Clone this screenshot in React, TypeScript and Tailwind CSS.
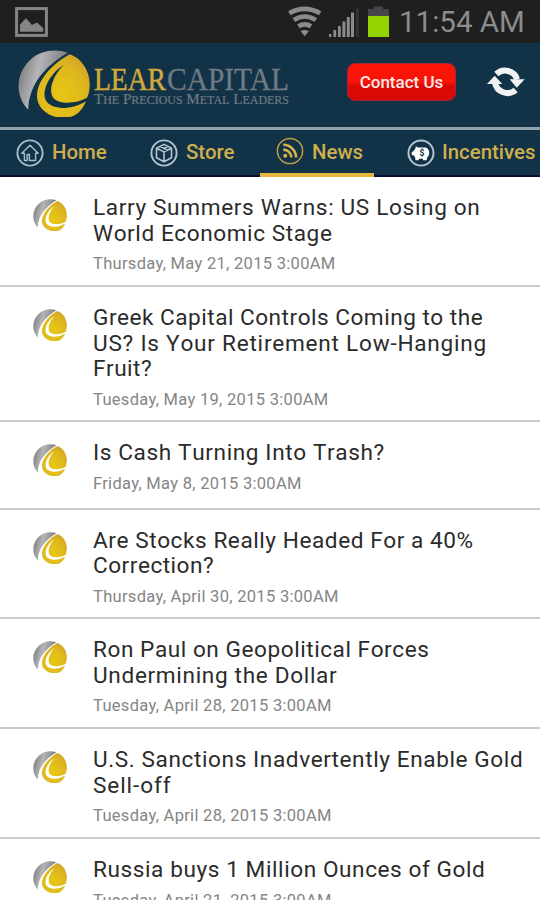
import React from "react";

type Line = [text: string, tracking: string];
type Item = { lines: Line[]; date: string; height: string };

const items: Item[] = [
  {
    lines: [["Larry Summers Warns: US Losing on", "tracking-[0.66px]"], ["World Economic Stage", "tracking-[0.58px]"]],
    date: "Thursday, May 21, 2015 3:00AM",
    height: "h-[110px]",
  },
  {
    lines: [
      ["Greek Capital Controls Coming to the", "tracking-[0.5px]"],
      ["US? Is Your Retirement Low-Hanging", "tracking-[0.76px]"],
      ["Fruit?", "tracking-[0.5px]"],
    ],
    date: "Tuesday, May 19, 2015 3:00AM",
    height: "h-[135px]",
  },
  { lines: [["Is Cash Turning Into Trash?", "tracking-[0.62px]"]], date: "Friday, May 8, 2015 3:00AM", height: "h-[87.5px]" },
  {
    lines: [["Are Stocks Really Headed For a 40%", "tracking-[0.56px]"], ["Correction?", "tracking-[0.5px]"]],
    date: "Thursday, April 30, 2015 3:00AM",
    height: "h-[109.5px]",
  },
  {
    lines: [["Ron Paul on Geopolitical Forces", "tracking-[0.55px]"], ["Undermining the Dollar", "tracking-[0.67px]"]],
    date: "Tuesday, April 28, 2015 3:00AM",
    height: "h-[110px]",
  },
  {
    lines: [["U.S. Sanctions Inadvertently Enable Gold", "tracking-[0.6px]"], ["Sell-off", "tracking-[0.9px]"]],
    date: "Tuesday, April 28, 2015 3:00AM",
    height: "h-[110px]",
  },
  { lines: [["Russia buys 1 Million Ounces of Gold", "tracking-[0.58px]"]], date: "Tuesday, April 21, 2015 3:00AM", height: "h-[88px]" },
];

function Emblem({ className, id }: { className: string; id: string }) {
  return (
    <svg className={className} viewBox="23 22 218 203" preserveAspectRatio="none">
      <defs>
        <linearGradient id={id + "s"} x1="0" y1="0.2" x2="1" y2="0.5">
          <stop offset="0" stopColor="#777779" />
          <stop offset="0.4" stopColor="#b5b5b7" />
          <stop offset="1" stopColor="#6d6d70" />
        </linearGradient>
        <radialGradient id={id + "g"} cx="0.45" cy="0.65" r="0.75">
          <stop offset="0" stopColor="#e8c713" />
          <stop offset="0.6" stopColor="#dfb81e" />
          <stop offset="1" stopColor="#cc9e2c" />
        </radialGradient>
      </defs>
      <path d="M173 30C138 18 92 22 60 52C12 96 16 166 54 203C56 130 98 76 173 30Z" fill={`url(#${id}s)`} />
      <path
        d="M180 35C218 48 242 90 240 130Q239 153 232 167C200 186 145 188 129 166C112 138 136 92 162 67C124 90 93 140 106 173C124 207 188 203 229 177C218 204 198 224 176 225H138C104 217 76 190 81 152C88 104 135 58 180 35Z"
        fill={`url(#${id}g)`}
      />
    </svg>
  );
}

function HomeIcon() {
  return (
    <svg className="size-7 shrink-0" viewBox="0 0 28 28" fill="none" stroke="#a9bccb">
      <circle cx="14" cy="14" r="12.6" strokeWidth="1.9" />
      <path d="M5.8 14.3L14 6.2l8.2 8.1h-2.6v7.2h-6.2v-6h-2.2v6H8.4v-7.2z" strokeWidth="1.4" strokeLinejoin="round" />
    </svg>
  );
}

function StoreIcon() {
  return (
    <svg className="size-7 shrink-0" viewBox="0 0 28 28" fill="none" stroke="#b4c3cf">
      <circle cx="14" cy="14" r="12.6" strokeWidth="1.9" />
      <path d="M14 5.4l7.5 3.8v9.5L14 22.8l-7.5-4.1V9.2zM6.5 9.2l7.5 3.7 7.5-3.7M14 12.9v9.9M10 7.4l7.7 3.8M17.7 7.4l-4 1.8" strokeWidth="1.6" strokeLinejoin="round" />
    </svg>
  );
}

function NewsIcon() {
  return (
    <svg className="size-7 shrink-0" viewBox="0 0 28 28" fill="none" stroke="#d9b248">
      <circle cx="14" cy="14" r="12.6" strokeWidth="1.5" stroke="#bd9d48" />
      <circle cx="9.3" cy="18.7" r="2" fill="#d9b248" stroke="none" />
      <path d="M7.3 12.6a8 8 0 0 1 8 8M7.3 7.8a12.8 12.8 0 0 1 12.8 12.8" strokeWidth="2.6" />
    </svg>
  );
}

function IncentivesIcon() {
  return (
    <svg className="size-7 shrink-0" viewBox="0 0 28 28">
      <circle cx="14" cy="14" r="12.5" strokeWidth="2" fill="none" stroke="#b4c3cf" />
      <path d="M4.8 13l2.1-1.2 1.6-2.6.2-2 2.3 1.2h7.6c2.2.7 3.6 2.5 3.7 5.4-.1 2.4-1 3.8-2.2 4.9l-.4 2.5h-3.5l-.5-1.5h-3.5l-.5 1.5H8.5L8 17.9l-1.4-1.6H4.8z" fill="#fff" />
      <text x="15" y="17" textAnchor="middle" fontSize="8.5" fontWeight="700" fill="#123347" className="font-[Roboto,sans-serif]">$</text>
    </svg>
  );
}

function NavLabel({ children }: { children: string }) {
  return <span className="text-[20.4px] leading-7 font-medium text-[#cfae4e]">{children}</span>;
}

export default function App() {
  return (
    <div className="flex h-[900px] w-[540px] flex-col overflow-hidden bg-white font-[Roboto,sans-serif]">
      {/* Status bar */}
      <div className="flex h-[43px] shrink-0 items-start bg-[#1f1f1f]">
        <svg className="mt-[7px] ml-[15px] h-[30px] w-[33px]" viewBox="0 0 33 30">
          <rect x="1.6" y="1.6" width="29.8" height="26.8" fill="none" stroke="#858585" strokeWidth="3" />
          <path d="M5 24.8v-7.3l6-6.3 6 6.8 5-2.6 6.2 5.7v3.7z" fill="#858585" />
        </svg>
        <svg className="ml-[239px] h-[43px] w-[106px]" viewBox="287 0 106 43">
          <g fill="none" stroke="#8b8b8b" strokeWidth="4.6">
            <path d="M289.3 13.2q15.2-8.6 30.8 0" />
            <path d="M293.8 20q11-7 22 0" />
            <path d="M298.4 26.3q6.2-4 12.6 0" />
          </g>
          <path d="M300.6 31.2q4-2.2 8.2 0l-4.1 5z" fill="#8b8b8b" />
          <g fill="#8b8b8b">
            <rect x="329" y="34" width="2.4" height="3" />
            <rect x="333.5" y="30" width="2.7" height="7" />
            <rect x="338" y="26" width="2.8" height="11" />
            <rect x="342.4" y="21.5" width="3" height="15.5" />
            <rect x="346.8" y="17" width="3" height="20" />
            <rect x="351" y="12.5" width="3" height="24.5" />
            <rect x="356" y="8" width="2.8" height="29" fill="#343434" />
          </g>
          <path d="M368 16V9h6V6.5h9V9h6v7z" fill="#45454a" />
          <rect x="368" y="16" width="21" height="21" fill="#92d300" />
        </svg>
        <span className="ml-[6px] text-[29.5px] leading-[44px] whitespace-nowrap text-[#8c8c8c]">11:54 AM</span>
      </div>

      {/* Brand header */}
      <header className="flex h-[84px] shrink-0 items-start bg-[#123347]">
        <Emblem id="h" className="mt-[7px] ml-[18px] h-[67px] w-[72px] shrink-0" />
        <svg className="mt-[10px] ml-[3px] h-[60px] w-[198px] shrink-0 font-['Liberation_Serif',serif]" viewBox="93 53 198 60">
          <text x="94" y="89.6" fontSize="31" fill="#d2aa3c" stroke="#d2aa3c" strokeWidth="0.5" textLength="72" lengthAdjust="spacingAndGlyphs">LEAR</text>
          <text x="167" y="89.6" fontSize="31" fill="#6f7a84" stroke="#6f7a84" strokeWidth="0.3" textLength="122" lengthAdjust="spacingAndGlyphs">CAPITAL</text>
          <text x="94" y="103.8" fontSize="14.5" fill="#6f7a84" stroke="#6f7a84" strokeWidth="0.2" textLength="195" lengthAdjust="spacingAndGlyphs">
            T<tspan fontSize="11.5">HE</tspan> P<tspan fontSize="11.5">RECIOUS</tspan> M<tspan fontSize="11.5">ETAL</tspan> L<tspan fontSize="11.5">EADERS</tspan>
          </text>
        </svg>
        <button className="mt-[20px] ml-[56px] flex h-[38px] w-[109px] shrink-0 items-center justify-center rounded-[8px] border border-[#9b2936] bg-linear-to-b from-[#fa1408] from-50% to-[#d90a05] to-60% pt-px text-[17px] font-medium whitespace-nowrap text-[#fbe9e9]">
          Contact Us
        </button>
        <svg className="mt-[20px] ml-[31px] h-[36px] w-[38px] shrink-0" viewBox="654 189 114 108">
          <path d="M682 222A38 38 0 0 1 744 238M740 270A38 38 0 0 1 678 248" fill="none" stroke="#f1f2f4" strokeWidth="18" />
          <path d="M722 238h45l-24 25zM654 252h46l-23-25z" fill="#f1f2f4" />
        </svg>
      </header>

      {/* Tabs */}
      <nav className="flex h-[50px] shrink-0 border-t-[3px] border-b-2 border-t-[#93a3ad] border-b-[#070d35] bg-[#123347]">
        <div className="flex w-[260px] shrink-0">
          <div className="mt-[8px] ml-[16px] flex w-[134px] gap-[8px]">
            <div className="pt-px"><HomeIcon /></div>
            <NavLabel>Home</NavLabel>
          </div>
          <div className="mt-[8px] flex gap-[8px]">
            <div className="pt-px"><StoreIcon /></div>
            <NavLabel>Store</NavLabel>
          </div>
        </div>
        <div className="-mb-0.5 flex w-[114px] shrink-0 border-b-4 border-[#e5b83b]">
          <div className="mt-[8px] ml-[16px] flex gap-[8px]">
            <div className="-mt-px"><NewsIcon /></div>
            <NavLabel>News</NavLabel>
          </div>
        </div>
        <div className="mt-[8px] ml-[33px] flex gap-[7px]">
          <div className="pt-px"><IncentivesIcon /></div>
          <NavLabel>Incentives</NavLabel>
        </div>
      </nav>

      {/* News list */}
      <main className="flex flex-col">
        {items.map((it, i) => (
          <article key={i} className={`flex shrink-0 border-b-2 border-[#cbcbcb] ${it.height}`}>
            <Emblem id={"e" + i} className="mt-[22px] ml-[33px] h-[32px] w-[34px] shrink-0" />
            <div className="ml-[26px] pt-[18px] whitespace-nowrap">
              <h2 className="text-[22.6px] leading-[25.5px] text-[#2b2b2b] [font-kerning:none]">
                {it.lines.map(([text, tracking]) => (
                  <span key={text} className={`block ${tracking}`}>{text}</span>
                ))}
              </h2>
              <p className="mt-[8px] text-[16.5px] leading-[20px] tracking-[0.3px] text-[#858585]">{it.date}</p>
            </div>
          </article>
        ))}
      </main>
    </div>
  );
}
